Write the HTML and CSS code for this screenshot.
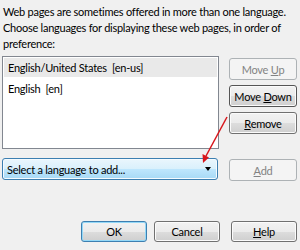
FILE: index.html
```html
<!DOCTYPE html>
<html lang="en">

<head>
    <meta charset="UTF-8">
    <title>Language Preference</title>
    <link rel="stylesheet" href="styles.css">
</head>

<body>
    <div class="dialog">
        <p class="intro">Web pages are sometimes offered in more than one language.<br>
            Choose languages for displaying these web pages, in order of<br>
            preference:</p>

        <div class="main">
            <div class="list">
                <div class="item selected">English/United States&nbsp; [en-us]</div>
                <div class="item">English&nbsp; [en]</div>
            </div>
            <div class="side">
                <button class="btn" disabled>Move <u>U</u>p</button>
                <button class="btn focus">Move <u>D</u>own</button>
                <button class="btn"><u>R</u>emove</button>
            </div>
            <div class="select">
                <span>Select a language to add...</span>
                <span class="caret"></span>
            </div>
            <button class="btn" disabled><u>A</u>dd</button>
        </div>

        <div class="footer">
            <button class="btn default">OK</button>
            <button class="btn">Cancel</button>
            <button class="btn"><u>H</u>elp</button>
        </div>

        <svg class="arrow" width="300" height="250" viewBox="0 0 300 250">
            <line x1="227" y1="117" x2="206" y2="156" stroke="#d8151b" stroke-width="1.5" />
            <polygon points="203,163 202.5,154 209,157.5" fill="#d8151b" />
        </svg>
    </div>
</body>

</html>
```

FILE: styles.css
```css
html,
body {
    margin: 0;
    background-color: #f0f0f0;
}

.dialog {
    position: relative;
    width: 300px;
    height: 250px;
    font-family: Lato, "Noto Sans", sans-serif;
    font-size: 11px;
    letter-spacing: -0.25px;
    color: #000;
}

.intro {
    margin: 0;
    padding: 4px 0 0 3px;
    line-height: 16px;
    white-space: nowrap;
}

.main {
    display: grid;
    grid-template-columns: 217px 68px;
    column-gap: 10px;
    row-gap: 9px;
    margin: 4px 0 0 2px;
}

.list {
    height: 89px;
    border: 1px solid #828790;
    background-color: #fff;
    padding: 1px;
}

.item {
    height: 19px;
    line-height: 19px;
    padding-left: 4px;
    margin-bottom: 2px;
}

.item.selected {
    background-color: #e9e9e9;
}

.side {
    display: flex;
    flex-direction: column;
    gap: 5px;
    padding-top: 2px;
}

.btn {
    height: 22px;
    width: 68px;
    padding: 0;
    border: 1px solid #707070;
    border-radius: 3px;
    background: linear-gradient(#f2f2f2 0%, #ebebeb 50%, #dddddd 51%, #cfcfcf 100%);
    font-family: Lato, "Noto Sans", sans-serif;
    font-size: 11px;
    letter-spacing: -0.25px;
    color: #000;
    box-shadow: inset 0 0 0 1px #fbfbfb;
}

.btn.focus {
    border-color: #555;
}

.btn.default {
    border-color: #3c7fb1;
    box-shadow: inset 0 0 0 1px #94d8f7;
}

.btn:disabled {
    border-color: #adb2b5;
    background: #f4f4f4;
    color: #838383;
    box-shadow: none;
}

.select {
    display: flex;
    align-items: center;
    justify-content: space-between;
    height: 22px;
    width: 216px;
    padding: 0 6px 0 4px;
    box-sizing: border-box;
    border: 1px solid #3c7fb1;
    border-radius: 3px;
    background: linear-gradient(#eaf6fd 0%, #d9f0fc 50%, #bee6fd 51%, #a7d9f5 100%);
    box-shadow: inset 0 0 0 1px #f5fbff;
}

.select + .btn {
    margin-top: 1px;
}

.caret {
    width: 0;
    height: 0;
    border-left: 3.5px solid transparent;
    border-right: 3.5px solid transparent;
    border-top: 4px solid #000;
}

.footer {
    display: flex;
    justify-content: flex-end;
    gap: 7px;
    margin: 40px 3px 0 0;
}

.footer .btn {
    width: 66px;
    height: 21px;
}

.footer .btn:nth-child(3) {
    margin-left: 4px;
}

.arrow {
    position: absolute;
    left: 0;
    top: 0;
    pointer-events: none;
}
```
